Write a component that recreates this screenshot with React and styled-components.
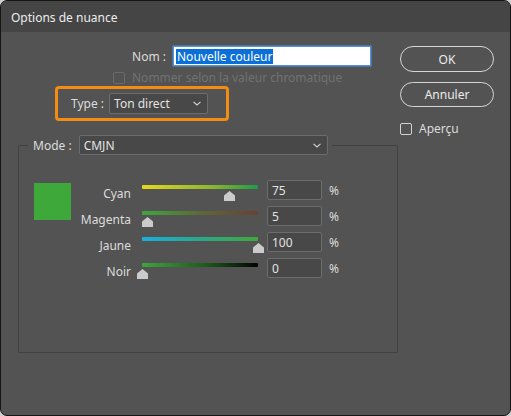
import React from "react";
import styled, { createGlobalStyle } from "styled-components";

const Global = createGlobalStyle`
  html, body {
    margin: 0;
    padding: 0;
    background: #cfcfcf;
  }
  body {
    font-family: "Noto Sans", "Liberation Sans", Arial, sans-serif;
    font-size: 12px;
  }
`;

const channels = [
  { name: "Cyan", value: 75, grad: "linear-gradient(90deg, #e6d81c 0%, #8cb532 60%, #1f9a48 100%)" },
  { name: "Magenta", value: 5, grad: "linear-gradient(90deg, #3ea63c 0%, #5c6a36 50%, #6a4036 100%)" },
  { name: "Jaune", value: 100, grad: "linear-gradient(90deg, #18aee0 0%, #2aa88a 50%, #40a83a 100%)" },
  { name: "Noir", value: 0, grad: "linear-gradient(90deg, #3ea63c 0%, #1e5a1e 55%, #020402 100%)" },
];

const Chevron = () => (
  <svg width="8" height="5" viewBox="0 0 8 5">
    <path d="M0.5 0.8 L4 4 L7.5 0.8" fill="none" stroke="#d4d4d4" strokeWidth="1.1" />
  </svg>
);

const App = () => {
  return (
    <Window>
      <Global />
      <TitleBar>Options de nuance</TitleBar>
      <Body>
        <Main>
          <Row>
            <Label w={148}>Nom :</Label>
            <NameField>
              <Selected>Nouvelle couleur</Selected>
            </NameField>
          </Row>
          <CheckRow indent={95} top={5}>
            <Box disabled />
            <CheckText disabled>Nommer selon la valeur chromatique</CheckText>
          </CheckRow>
          <Highlight>
            <Label>Type :</Label>
            <Select w={99} h={21}>
              <span>Ton direct</span>
              <Chevron />
            </Select>
          </Highlight>
          <Group>
            <Legend>
              <Label>Mode :</Label>
              <Select w={249} h={20}>
                <span>CMJN</span>
                <Chevron />
              </Select>
            </Legend>
            <GroupInner>
              <Swatch />
              <Sliders>
                {channels.map((c) => (
                  <SliderRow key={c.name}>
                    <ChannelName>{c.name}</ChannelName>
                    <Slider>
                      <Track style={{ background: c.grad }} />
                      <Thumb style={{ left: `${(c.value / 100) * 116}px` }}>
                        <svg width="11" height="10" viewBox="0 0 11 10">
                          <path d="M5.5 0 L11 4.5 L11 10 L0 10 L0 4.5 Z" fill="#cbcbcb" />
                        </svg>
                      </Thumb>
                    </Slider>
                    <NumBox>{c.value}</NumBox>
                    <Pct>%</Pct>
                  </SliderRow>
                ))}
              </Sliders>
            </GroupInner>
          </Group>
        </Main>
        <Side>
          <PillButton h={26}>OK</PillButton>
          <PillButton h={25}>Annuler</PillButton>
          <CheckRow top={5}>
            <Box />
            <CheckText>Aperçu</CheckText>
          </CheckRow>
        </Side>
      </Body>
    </Window>
  );
};

export default App;

const Window = styled.div`
  width: 511px;
  height: 416px;
  box-sizing: border-box;
  border: 1px solid #151515;
  border-radius: 7px;
  overflow: hidden;
  background: #535353;
  color: #dcdcdc;
  display: flex;
  flex-direction: column;
`;

const TitleBar = styled.div`
  height: 31px;
  flex: none;
  background: #454545;
  display: flex;
  align-items: center;
  padding: 2px 0 0 10px;
  box-sizing: border-box;
  color: #ececec;
  font-size: 12px;
`;

const Body = styled.div`
  display: flex;
  padding: 14px 16px 0 17px;
  gap: 2px;
`;

const Main = styled.div`
  width: 380px;
  display: flex;
  flex-direction: column;
`;

const Side = styled.div`
  width: 94px;
  display: flex;
  flex-direction: column;
  gap: 10px;
`;

const Row = styled.div`
  display: flex;
  align-items: center;
  gap: 7px;
  height: 20px;
`;

const Label = styled.div`
  width: ${({ w }) => (w ? `${w}px` : "auto")};
  text-align: right;
  color: #dcdcdc;
  white-space: nowrap;
`;

const NameField = styled.div`
  width: 198px;
  height: 20px;
  box-sizing: border-box;
  background: #ffffff;
  border: 1px solid #4f93e0;
  box-shadow: 0 0 0 0.5px #4f93e0;
  display: flex;
  align-items: center;
  padding-left: 2px;
`;

const Selected = styled.span`
  background: #0a6fd6;
  color: #ffffff;
  line-height: 15px;
  padding: 0 1px;
`;

const CheckRow = styled.div`
  display: flex;
  align-items: center;
  gap: 7px;
  margin-left: ${({ indent }) => (indent ? `${indent}px` : "0")};
  margin-top: ${({ top }) => (top ? `${top}px` : "0")};
  height: 13px;
`;

const Box = styled.div`
  width: 12px;
  height: 12px;
  box-sizing: border-box;
  border: 1px solid ${({ disabled }) => (disabled ? "#6a6a6a" : "#d2d2d2")};
  border-radius: 2px;
`;

const CheckText = styled.span`
  color: ${({ disabled }) => (disabled ? "#717171" : "#dcdcdc")};
  white-space: nowrap;
`;

const Highlight = styled.div`
  margin: 2px 0 0 37px;
  width: 174px;
  height: 35px;
  box-sizing: border-box;
  border: 3px solid #f28c12;
  border-radius: 4px;
  display: flex;
  align-items: center;
  gap: 5px;
  padding-left: 13px;
`;

const Select = styled.div`
  width: ${({ w }) => w}px;
  height: ${({ h }) => h}px;
  box-sizing: border-box;
  background: #484848;
  border: 1px solid #6c6c6c;
  border-radius: 2px;
  display: flex;
  align-items: center;
  justify-content: space-between;
  padding: 0 6px 0 4px;
  color: #e2e2e2;
`;

const Group = styled.fieldset`
  margin: 14px 0 0 0;
  padding: 0;
  width: 380px;
  height: 218px;
  box-sizing: border-box;
  border: 1px solid #414141;
  border-radius: 1px;
  min-width: 0;
`;

const Legend = styled.legend`
  display: flex;
  align-items: center;
  gap: 7px;
  margin-left: 9px;
  padding: 0 4px 0 5px;
`;

const GroupInner = styled.div`
  display: flex;
  align-items: flex-start;
  padding: 22px 0 0 15px;
`;

const Swatch = styled.div`
  width: 37px;
  height: 37px;
  margin-top: 6px;
  background: #3ea83a;
  flex: none;
`;

const Sliders = styled.div`
  display: flex;
  flex-direction: column;
`;

const SliderRow = styled.div`
  display: flex;
  align-items: center;
  height: 26px;
`;

const ChannelName = styled.div`
  width: 60px;
  text-align: right;
  margin-right: 11px;
  padding-top: 6px;
  color: #dcdcdc;
`;

const Slider = styled.div`
  position: relative;
  width: 116px;
  height: 15px;
  margin-top: 4px;
  margin-right: 9px;
`;

const Track = styled.div`
  height: 4px;
  width: 116px;
  border-radius: 1px;
`;

const Thumb = styled.div`
  position: absolute;
  top: 6px;
  margin-left: -5.5px;
  width: 11px;
  height: 10px;
  line-height: 0;
`;

const NumBox = styled.div`
  width: 55px;
  height: 20px;
  box-sizing: border-box;
  background: #484848;
  border: 1px solid #6c6c6c;
  border-radius: 2px;
  display: flex;
  align-items: center;
  padding-left: 4px;
  color: #e2e2e2;
  margin-right: 7px;
`;

const Pct = styled.span`
  color: #dcdcdc;
`;

const PillButton = styled.div`
  height: ${({ h }) => h}px;
  box-sizing: border-box;
  border: 1.5px solid #d6d6d6;
  border-radius: 13px;
  display: flex;
  align-items: center;
  justify-content: center;
  color: #ececec;
`;
